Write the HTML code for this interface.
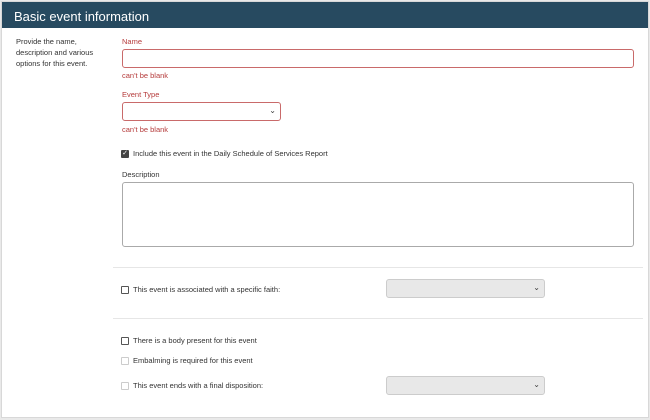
<!DOCTYPE html>
<html><head><style>
*{box-sizing:border-box;margin:0;padding:0}
body{width:650px;height:420px;background:#e9e9e9;font-family:"Liberation Sans",sans-serif;position:relative;overflow:hidden;color:#333}
.card{position:absolute;left:1px;top:1px;width:648px;height:417px;background:#fff;border:1px solid #d8d8d8}
.hdr{position:absolute;left:0;top:0;width:100%;height:26px;background:#274a60;color:#fff;font-size:13px;padding:7px 0 0 12px}
.a{position:absolute;font-size:7.5px;line-height:11px}
.red{color:#b53b3b}
.box{position:absolute;border:1px solid #c96a6a;border-radius:3px;background:#fff}
.gbox{position:absolute;border:1px solid #ccc;border-radius:3px;background:#e8e8e8}
.chev{position:absolute;right:4px;top:3px;font-size:8px;color:#444}
.cb{position:absolute;width:8px;height:8px;border:1px solid #555;border-radius:1px;background:#fff}
.cb.d{border-color:#ccc}
.hr{position:absolute;left:113px;width:530px;height:1px;background:#e6e6e6}
</style></head><body>
<div class="card">
<div class="hdr">Basic event information</div>
</div>
<div class="a" style="left:16px;top:36px;width:90px;line-height:11px">Provide the name, description and various options for this event.</div>
<div class="a red" style="left:122px;top:36px">Name</div>
<div class="box" style="left:122px;top:49px;width:512px;height:19px"></div>
<div class="a red" style="left:122px;top:70px">can't be blank</div>
<div class="a red" style="left:122px;top:89px">Event Type</div>
<div class="box" style="left:122px;top:102px;width:159px;height:19px"><span class="chev">&#8964;</span></div>
<div class="a red" style="left:122px;top:124px">can't be blank</div>
<div class="cb" style="left:121px;top:150px;background:#444;border-color:#444;color:#fff;font-size:7px;line-height:6px;text-align:center">&#10003;</div>
<div class="a" style="left:133px;top:148px">Include this event in the Daily Schedule of Services Report</div>
<div class="a" style="left:122px;top:169px">Description</div>
<div style="position:absolute;left:122px;top:182px;width:512px;height:65px;border:1px solid #aaa;border-radius:3px"></div>
<div class="hr" style="top:267px"></div>
<div class="cb" style="left:121px;top:286px"></div>
<div class="a" style="left:133px;top:284px">This event is associated with a specific faith:</div>
<div class="gbox" style="left:386px;top:279px;width:159px;height:19px"><span class="chev">&#8964;</span></div>
<div class="hr" style="top:318px"></div>
<div class="cb" style="left:121px;top:337px"></div>
<div class="a" style="left:133px;top:335px">There is a body present for this event</div>
<div class="cb d" style="left:121px;top:357px"></div>
<div class="a" style="left:133px;top:355px">Embalming is required for this event</div>
<div class="cb d" style="left:121px;top:382px"></div>
<div class="a" style="left:133px;top:380px">This event ends with a final disposition:</div>
<div class="gbox" style="left:386px;top:376px;width:159px;height:19px"><span class="chev">&#8964;</span></div>
</body></html>
